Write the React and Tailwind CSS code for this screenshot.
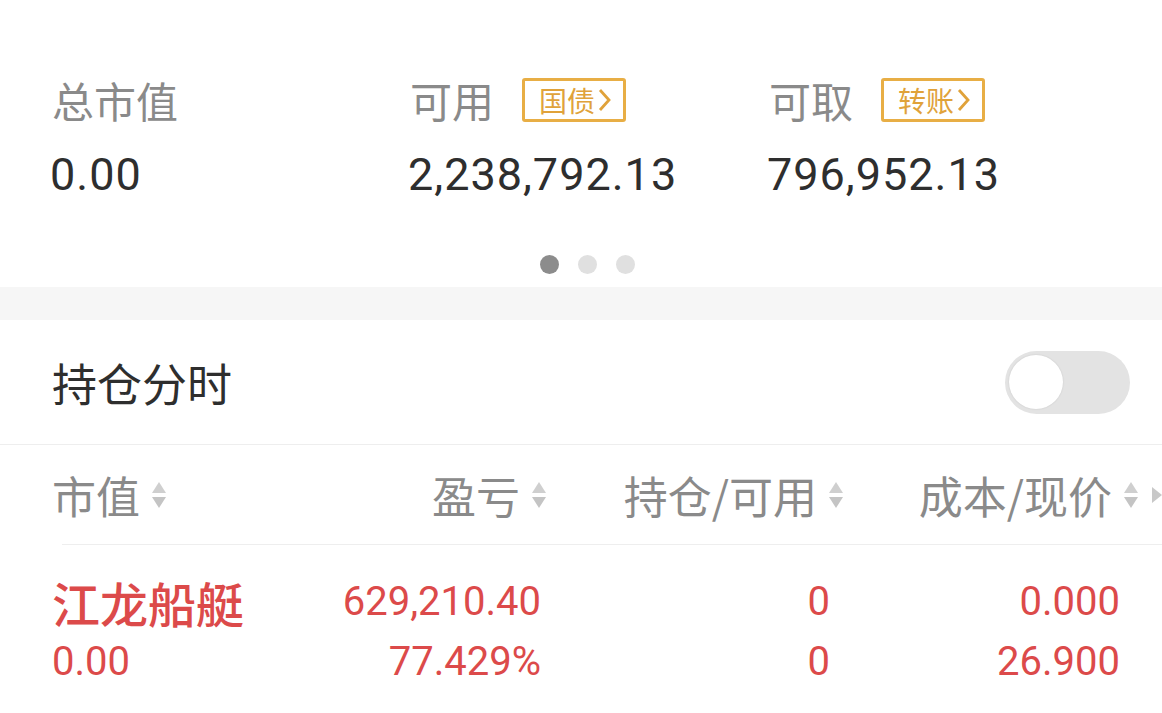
import React from "react";

const cjk = { fontFamily: '"Noto Sans CJK SC", "Noto Sans", sans-serif' };
const num = { fontFamily: 'Roboto, "Noto Sans", sans-serif' };

function SortArrows() {
  return (
    <svg width="18" height="30" viewBox="0 0 18 30" className="ml-[10px] shrink-0">
      <path d="M9 2 L16 13 L2 13 Z" fill="#cfcfcf" />
      <path d="M9 28 L16 17 L2 17 Z" fill="#c4c4c4" />
    </svg>
  );
}

function Badge({ text }) {
  return (
    <span className="ml-[28px] flex items-center h-[44px] pl-[14px] pr-[10px] border-[3px] border-[#e8ae45] rounded-[3px] text-[#e0a23a] text-[28px]">
      {text}
      <svg width="16" height="26" viewBox="0 0 16 26" className="ml-[2px]">
        <path d="M3 3 L12 13 L3 23" fill="none" stroke="#e0a23a" strokeWidth="2.8" />
      </svg>
    </span>
  );
}

export default function App() {
  const top = [
    { label: "总市值", value: "0.00" },
    { label: "可用", value: "2,238,792.13", badge: "国债" },
    { label: "可取", value: "796,952.13", badge: "转账" },
  ];

  return (
    <div className="w-[1162px] h-[713px] bg-white overflow-hidden" style={cjk}>
      {/* ASSETS */}
      <div className="pt-[78px] pl-[52px] grid grid-cols-[358px_359px_358px]">
        {top.map((t) => (
          <div key={t.label}>
            <div className="flex items-center h-[44px]">
              <span className="text-[42px] leading-none text-[#8a8a8a]">{t.label}</span>
              {t.badge && <Badge text={t.badge} />}
            </div>
            <div className="mt-[30px] text-[45px] leading-none tracking-[1px] text-[#2e2e2e] -ml-[2px]" style={num}>
              {t.value}
            </div>
          </div>
        ))}
      </div>

      {/* DOTS */}
      <div className="mt-[58px] flex justify-center gap-[19px] pl-[12px]">
        <span className="w-[19px] h-[19px] rounded-full bg-[#8c8c8c]" />
        <span className="w-[19px] h-[19px] rounded-full bg-[#e0e0e0]" />
        <span className="w-[19px] h-[19px] rounded-full bg-[#e0e0e0]" />
      </div>

      <div className="mt-[13px] h-[33px] bg-[#f6f6f6]" />

      {/* 持仓分时 */}
      <div className="h-[125px] flex items-center justify-between pl-[52px] pr-[32px] border-b border-[#eeeeee]">
        <span className="text-[45px] text-[#2e2e2e] leading-none">持仓分时</span>
        <div className="w-[125px] h-[63px] rounded-full bg-[#e3e3e3] flex items-center pl-[4px]">
          <span className="w-[54px] h-[54px] rounded-full bg-white shadow-[0_0_2px_rgba(0,0,0,0.12)]" />
        </div>
      </div>

      {/* HEADER */}
      <div className="h-[99px] grid grid-cols-[248px_248px_297px_295px] pl-[52px] items-center text-[#8a8a8a] text-[44px] leading-none">
        <div className="flex items-center">市值<SortArrows /></div>
        <div className="flex items-center justify-end">盈亏<SortArrows /></div>
        <div className="flex items-center justify-end">持仓/可用<SortArrows /></div>
        <div className="flex items-center justify-end relative">
          成本/现价<SortArrows />
          <svg width="10" height="20" viewBox="0 0 10 20" className="absolute -right-[22px] top-1/2 -translate-y-1/2">
            <path d="M0 2 L10 10 L0 18 Z" fill="#c8c8c8" />
          </svg>
        </div>
      </div>
      <div className="ml-[62px] border-t border-[#eeeeee]" />

      {/* ROW */}
      <div className="pt-[35px] grid grid-cols-[248px_248px_297px_295px] pl-[52px] text-[#dc4a4a] leading-none">
        <div>
          <div className="text-[48px] font-medium h-[44px] flex items-center">江龙船艇</div>
          <div className="mt-[18px] text-[40px] h-[40px] flex items-center" style={num}>0.00</div>
        </div>
        <div className="text-right pr-[7px] text-[40px]" style={num}>
          <div className="h-[44px] flex items-center justify-end">629,210.40</div>
          <div className="mt-[18px] h-[40px] flex items-center justify-end">77.429%</div>
        </div>
        <div className="text-right pr-[15px] text-[40px]" style={num}>
          <div className="h-[44px] flex items-center justify-end">0</div>
          <div className="mt-[18px] h-[40px] flex items-center justify-end">0</div>
        </div>
        <div className="text-right pr-[20px] text-[40px]" style={num}>
          <div className="h-[44px] flex items-center justify-end">0.000</div>
          <div className="mt-[18px] h-[40px] flex items-center justify-end">26.900</div>
        </div>
      </div>
    </div>
  );
}
